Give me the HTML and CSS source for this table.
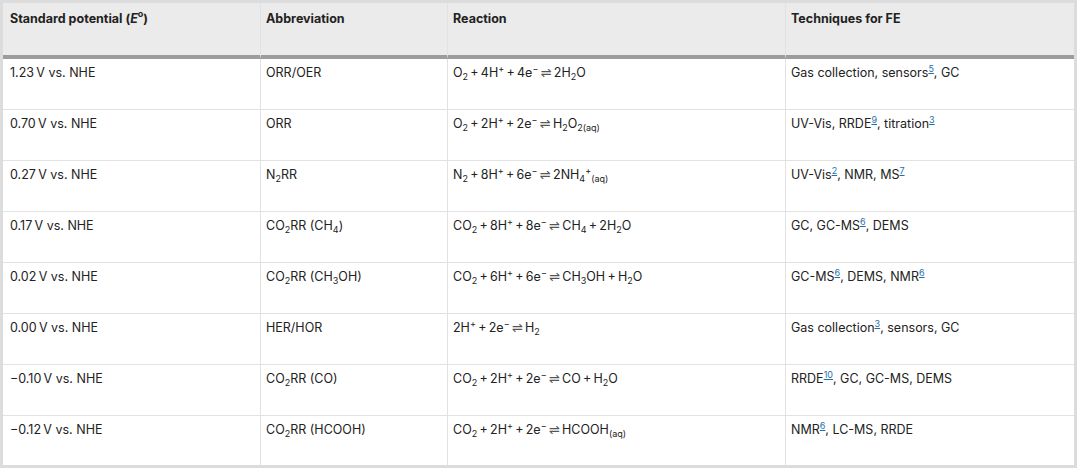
FILE: index.html
```html
<!DOCTYPE html>
<html>
<head>
<meta charset="utf-8">
<link rel="stylesheet" href="styles.css">
</head>
<body>
<table class="data">
  <colgroup>
    <col class="c1"><col class="c2"><col class="c3"><col class="c4">
  </colgroup>
  <thead>
    <tr>
      <th>Standard potential (<i>E</i><sup class="deg">o</sup>)</th>
      <th>Abbreviation</th>
      <th>Reaction</th>
      <th>Techniques for FE</th>
    </tr>
  </thead>
  <tbody>
    <tr>
      <td>1.23&#8201;V vs. NHE</td>
      <td>ORR/OER</td>
      <td>O<sub>2</sub>&#8201;+&#8201;4H<sup>+</sup>&#8201;+&#8201;4e<sup>−</sup>&#8201;<span class="eq">⇌</span>&#8201;2H<sub>2</sub>O</td>
      <td>Gas collection, sensors<a class="ref">5</a>, GC</td>
    </tr>
    <tr>
      <td>0.70&#8201;V vs. NHE</td>
      <td>ORR</td>
      <td>O<sub>2</sub>&#8201;+&#8201;2H<sup>+</sup>&#8201;+&#8201;2e<sup>−</sup>&#8201;<span class="eq">⇌</span>&#8201;H<sub>2</sub>O<sub>2(aq)</sub></td>
      <td>UV-Vis, RRDE<a class="ref">9</a>, titration<a class="ref">3</a></td>
    </tr>
    <tr>
      <td>0.27&#8201;V vs. NHE</td>
      <td>N<sub>2</sub>RR</td>
      <td>N<sub>2</sub>&#8201;+&#8201;8H<sup>+</sup>&#8201;+&#8201;6e<sup>−</sup>&#8201;<span class="eq">⇌</span>&#8201;2NH<sub>4</sub><sup>+</sup><sub>(aq)</sub></td>
      <td>UV-Vis<a class="ref">2</a>, NMR, MS<a class="ref">7</a></td>
    </tr>
    <tr>
      <td>0.17&#8201;V vs. NHE</td>
      <td>CO<sub>2</sub>RR (CH<sub>4</sub>)</td>
      <td>CO<sub>2</sub>&#8201;+&#8201;8H<sup>+</sup>&#8201;+&#8201;8e<sup>−</sup>&#8201;<span class="eq">⇌</span>&#8201;CH<sub>4</sub>&#8201;+&#8201;2H<sub>2</sub>O</td>
      <td>GC, GC-MS<a class="ref">6</a>, DEMS</td>
    </tr>
    <tr>
      <td>0.02&#8201;V vs. NHE</td>
      <td>CO<sub>2</sub>RR (CH<sub>3</sub>OH)</td>
      <td>CO<sub>2</sub>&#8201;+&#8201;6H<sup>+</sup>&#8201;+&#8201;6e<sup>−</sup>&#8201;<span class="eq">⇌</span>&#8201;CH<sub>3</sub>OH&#8201;+&#8201;H<sub>2</sub>O</td>
      <td>GC-MS<a class="ref">6</a>, DEMS, NMR<a class="ref">6</a></td>
    </tr>
    <tr>
      <td>0.00&#8201;V vs. NHE</td>
      <td>HER/HOR</td>
      <td>2H<sup>+</sup>&#8201;+&#8201;2e<sup>−</sup>&#8201;<span class="eq">⇌</span>&#8201;H<sub>2</sub></td>
      <td>Gas collection<a class="ref">3</a>, sensors, GC</td>
    </tr>
    <tr>
      <td>−0.10&#8201;V vs. NHE</td>
      <td>CO<sub>2</sub>RR (CO)</td>
      <td>CO<sub>2</sub>&#8201;+&#8201;2H<sup>+</sup>&#8201;+&#8201;2e<sup>−</sup>&#8201;<span class="eq">⇌</span>&#8201;CO&#8201;+&#8201;H<sub>2</sub>O</td>
      <td>RRDE<a class="ref">10</a>, GC, GC-MS, DEMS</td>
    </tr>
    <tr>
      <td>−0.12&#8201;V vs. NHE</td>
      <td>CO<sub>2</sub>RR (HCOOH)</td>
      <td>CO<sub>2</sub>&#8201;+&#8201;2H<sup>+</sup>&#8201;+&#8201;2e<sup>−</sup>&#8201;<span class="eq">⇌</span>&#8201;HCOOH<sub>(aq)</sub></td>
      <td>NMR<a class="ref">6</a>, LC-MS, RRDE</td>
    </tr>
  </tbody>
</table>
</body>
</html>
```

FILE: styles.css
```css
html, body {
  margin: 0;
  padding: 0;
  background: #ffffff;
}
body {
  font-family: Inter, "Liberation Sans", sans-serif;
  font-size: 12.5px;
  color: #222222;
}
.data {
  box-sizing: border-box;
  width: 1077px;
  border-collapse: separate;
  border-spacing: 0;
  table-layout: fixed;
  border: 3px solid #dcdcdc;
}
.c1 { width: 258px; }
.c2 { width: 187px; }
.c3 { width: 338px; }
.c4 { width: 288px; }
.data th,
.data td {
  text-align: left;
  vertical-align: top;
  line-height: 18px;
  height: 18px;
  border-right: 1px solid #e2e2e2;
  overflow: visible;
}
.data th:last-child,
.data td:last-child {
  border-right: 0;
}
.data th {
  font-weight: 700;
  background: #ebebeb;
  padding: 7px 6px 27px 5px;
  border-bottom: 4px solid #9c9c9c;
}
.data td {
  padding: 5px 6px 27px 5px;
  border-bottom: 1px solid #e2e2e2;
}
.data th:first-child,
.data td:first-child {
  padding-left: 7px;
}
.data tbody tr:last-child td {
  border-bottom: 0;
  padding-bottom: 26px;
}
sub, sup {
  font-size: 9px;
  line-height: 0;
  position: relative;
  vertical-align: baseline;
}
sub { top: 3px; }
sup { top: -5px; }
sup.deg { font-size: 9px; top: -6px; }
.eq {
  font-family: "DejaVu Sans", sans-serif;
  font-size: 13px;
  line-height: 0;
  color: #555555;
}
.ref {
  font-size: 9px;
  line-height: 0;
  position: relative;
  top: -5px;
  color: #1f6fa8;
  text-decoration: underline;
}
```
